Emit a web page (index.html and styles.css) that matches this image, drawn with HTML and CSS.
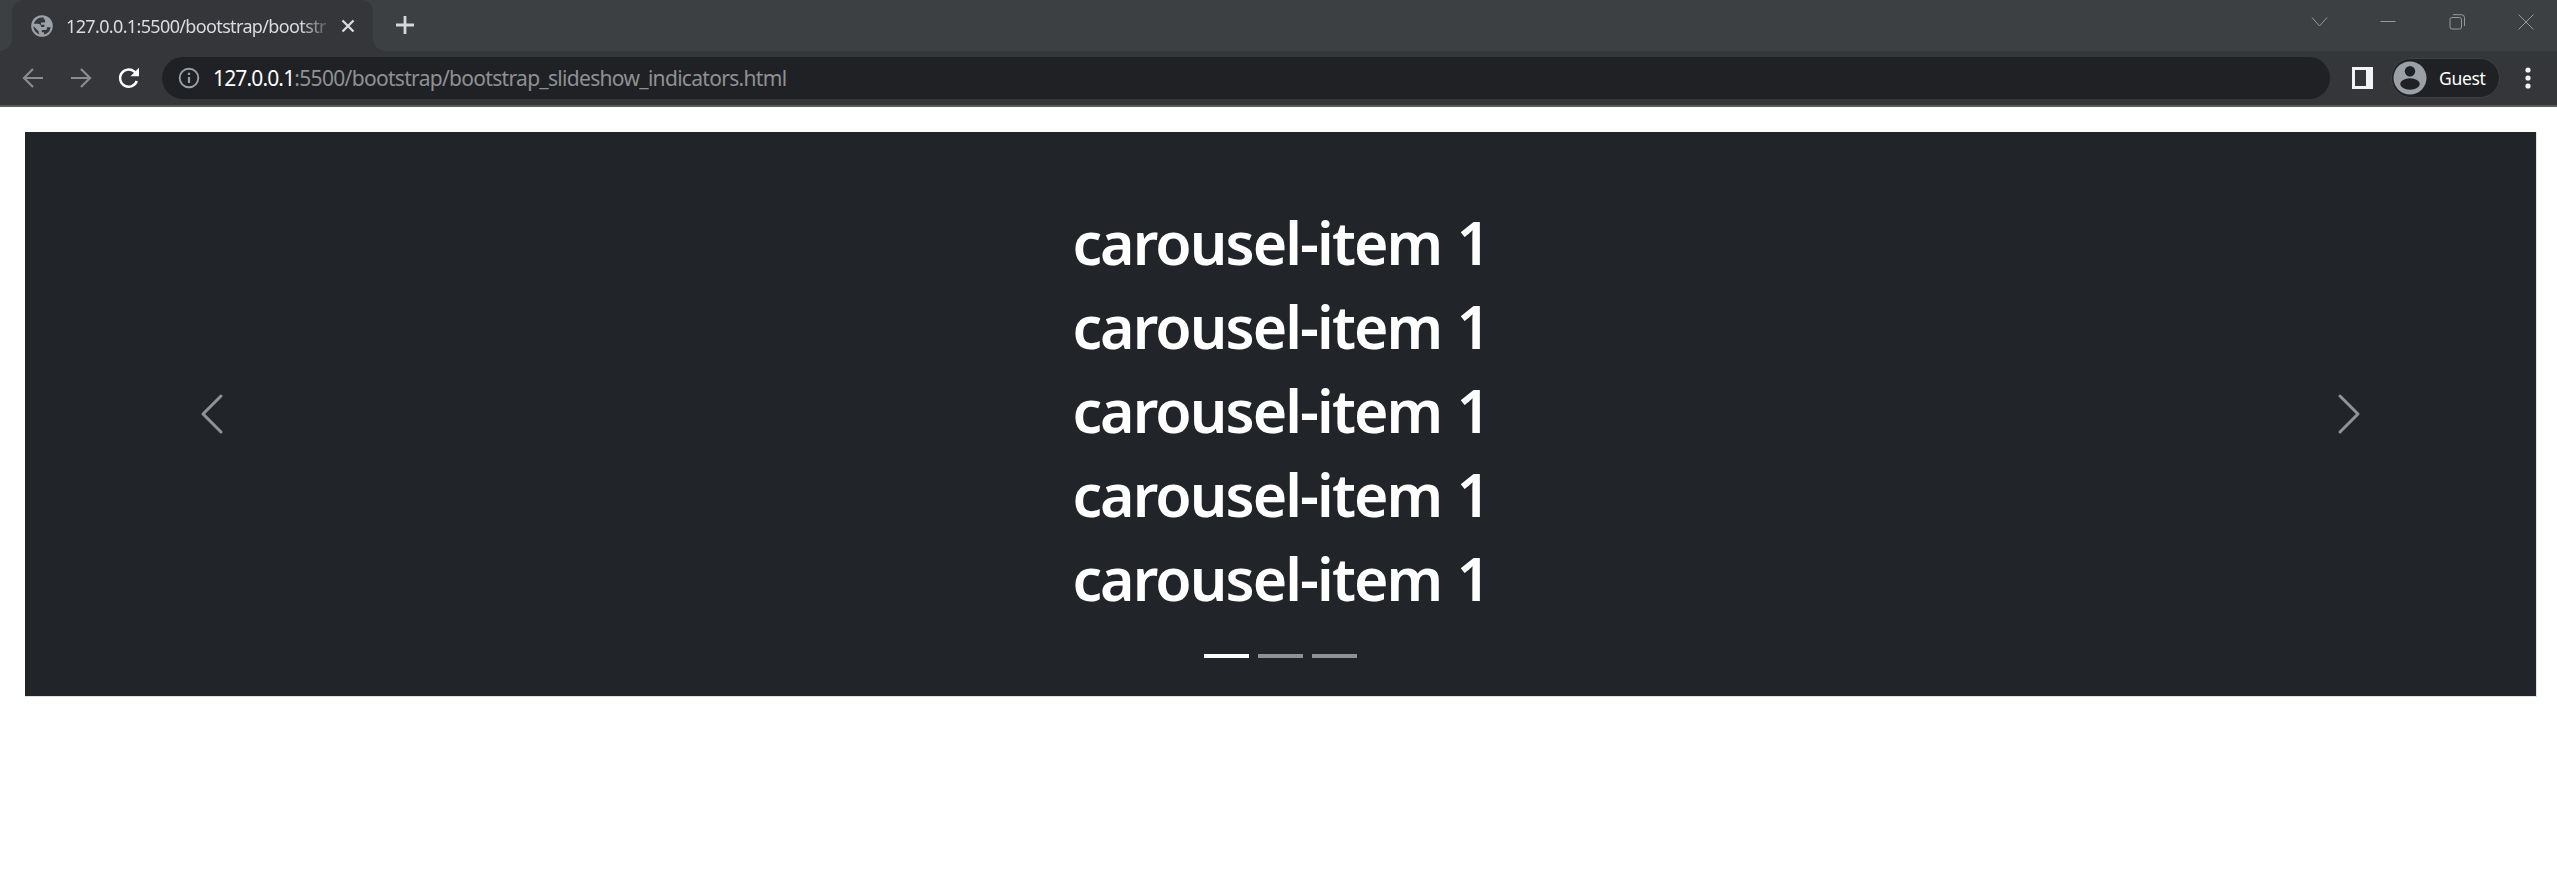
FILE: index.html
```
<!DOCTYPE html>
<html lang="en">
<head>
<meta charset="utf-8">
<title>127.0.0.1:5500/bootstrap/bootstrap_slideshow_indicators.html</title>
<link rel="stylesheet" href="styles.css">
</head>
<body>
<header class="browser">
  <div class="tabstrip">
    <div class="edge edge-left"></div>
    <div class="tab">
      <svg class="globe" width="22" height="22" viewBox="0 0 22 22"><circle cx="11" cy="11" r="10.800" fill="#9aa0a6"/><path fill="#35363a" d="M12.800 2.600a8.700 8.700 0 0 0-10 6.200h3.900c2.200 0 3.400 1.200 3.400 3.200h3.200v-2.200H10V7.600h2.800c.8 0 1.300-.5 1.300-1.300V4.600h-1.300z"/><path fill="#35363a" d="M2.300 11l5.400 5.400v1.100c0 1.100.9 2.100 2.200 2.100A8.700 8.700 0 0 1 2.300 11z"/><path fill="#35363a" d="M13 19.500v-2.200h-2.200v-2.200h3.300c1.200 0 1.800-.8 1.800-1.700v-1.200h3.700a8.700 8.700 0 0 1-6.600 7.300z"/></svg>
      <span class="tab-title">127.0.0.1:5500/bootstrap/bootstr</span>
      <svg class="tab-close" width="14" height="14" viewBox="0 0 14 14"><path d="M1.500 1.500l11 11m0-11l-11 11" stroke="#dadce0" stroke-width="2.300"/></svg>
    </div>
    <div class="edge edge-right"></div>
    <svg class="new-tab" width="18" height="18" viewBox="0 0 18 18"><path d="M9 0v18M0 9h18" stroke="#d5d7d9" stroke-width="2.800"/></svg>
    <div class="window-buttons">
      <svg width="17" height="16" viewBox="0 0 17 16"><path d="M1 3.500l7.500 8.500L16 3.500"/></svg>
      <svg width="16" height="16" viewBox="0 0 16 16"><path d="M.5 7.500h15"/></svg>
      <svg width="17" height="16" viewBox="0 0 17 16"><rect x="1" y="3.500" width="11.500" height="11.500" rx="2"/><path d="M4 .7h8.500a3 3 0 0 1 3 3V12"/></svg>
      <svg width="16" height="16" viewBox="0 0 16 16"><path d="M.5.5l15 15m0-15l-15 15"/></svg>
    </div>
  </div>
  <div class="toolbar">
    <div class="nav">
      <svg width="22" height="22" viewBox="0 0 22 22" stroke="#8b8c8f"><path d="M21 11H3M11 2l-9 9 9 9"/></svg>
      <svg width="22" height="22" viewBox="0 0 22 22" stroke="#8b8c8f"><path d="M1 11h18M11 2l9 9-9 9"/></svg>
      <svg width="22" height="22" viewBox="0 0 22 22" stroke="#fff"><path stroke-width="2.400" d="M18.800 14a8.600 8.600 0 1 1-2.400-9.300l1.500 1.500"/><path stroke="none" fill="#fff" d="M21 .8V9.300h-8.500z"/></svg>
    </div>
    <div class="address">
      <svg width="22" height="22" viewBox="0 0 22 22"><circle cx="11" cy="11" r="9.300" fill="none" stroke="#9aa0a6" stroke-width="1.900"/><path d="M11 10v6M11 5.800v2.200" stroke="#9aa0a6" stroke-width="2.200"/></svg>
      <span class="url"><span class="host">127.0.0.1</span><span class="path">:5500/bootstrap/bootstrap_slideshow_indicators.html</span></span>
    </div>
    <svg class="panel" width="21" height="22" viewBox="0 0 21 22"><path fill="#f1f3f4" fill-rule="evenodd" d="M0 0h21v22H0zM3 3v16h11V3z"/></svg>
    <div class="profile">
      <svg width="34" height="34" viewBox="0 0 34 34"><circle cx="17" cy="17" r="16.500" fill="#9aa0a6"/><circle cx="17" cy="10.300" r="5.200" fill="#202124"/><ellipse cx="17" cy="23" rx="9.800" ry="5.800" fill="#202124"/></svg>
      <span class="guest">Guest</span>
    </div>
    <svg class="menu" width="6" height="22" viewBox="0 0 6 22" fill="#f1f3f4"><circle cx="3" cy="3" r="2.600"/><circle cx="3" cy="11" r="2.600"/><circle cx="3" cy="19" r="2.600"/></svg>
  </div>
</header>
<main class="page">
  <section class="carousel">
    <div class="control"><svg width="48" height="48" viewBox="0 0 16 16" fill="#fff"><path d="M11.354 1.646a.5.5 0 0 1 0 .708L5.707 8l5.647 5.646a.5.5 0 0 1-.708.708l-6-6a.5.5 0 0 1 0-.708l6-6a.5.5 0 0 1 .708 0z"/></svg></div>
    <div class="slide">
      <h1>carousel-item 1</h1>
      <h1>carousel-item 1</h1>
      <h1>carousel-item 1</h1>
      <h1>carousel-item 1</h1>
      <h1>carousel-item 1</h1>
      <div class="indicators"><i class="active"></i><i></i><i></i></div>
    </div>
    <div class="control"><svg width="48" height="48" viewBox="0 0 16 16" fill="#fff"><path d="M4.646 1.646a.5.5 0 0 1 .708 0l6 6a.5.5 0 0 1 0 .708l-6 6a.5.5 0 0 1-.708-.708L10.293 8 4.646 2.354a.5.5 0 0 1 0-.708z"/></svg></div>
  </section>
</main>
</body>
</html>
```
FILE: styles.css
```
* { box-sizing: border-box; }
body { margin: 0; background: #fff; font-family: "Noto Sans", "Open Sans", sans-serif; overflow: hidden; }
svg { display: block; flex: none; }
.browser { height: 107px; background: #35363a; border-bottom: 2px solid #5a5b5f; }
.tabstrip { display: flex; height: 51px; background: #3c4043; }
.edge { width: 12px; height: 51px; flex: none; }
.edge-left { background: radial-gradient(circle at 0 0, transparent 11.500px, #35363a 12px) 0 39px / 12px 12px no-repeat; }
.edge-right { background: radial-gradient(circle at 100% 0, transparent 11.500px, #35363a 12px) 0 39px / 12px 12px no-repeat; }
.tab { display: flex; align-items: center; width: 361px; height: 51px; padding-left: 19px; background: #35363a; border-radius: 12px 12px 0 0; }
.tab-title { width: 261px; margin-left: 13px; white-space: nowrap; color: #dadce0; font-size: 18px; line-height: 30px; letter-spacing: -.64px; -webkit-mask-image: linear-gradient(90deg, #000 234px, transparent 268px); mask-image: linear-gradient(90deg, #000 234px, transparent 268px); }
.tab-close { margin-left: 14px; }
.new-tab { margin: 16px 0 0 11px; }
.window-buttons { display: flex; justify-content: space-between; width: 223px; height: 16px; margin: 14px 23px 0 auto; }
.window-buttons svg { fill: none; stroke: #96999b; stroke-width: 1; }
.toolbar { display: flex; align-items: center; height: 54px; }
.nav { display: flex; gap: 26px; width: 162px; padding-left: 22px; }
.nav svg { fill: none; stroke-width: 2.200; }
.address { display: flex; align-items: center; width: 2168px; height: 42px; padding-left: 16px; border-radius: 21px; background: #202124; }
.url { margin-left: 13px; font-size: 21px; line-height: 30px; white-space: nowrap; }
.host { color: #fff; letter-spacing: -.85px; }
.path { color: #8e9194; letter-spacing: -.69px; }
.panel { margin-left: 22px; }
.profile { display: flex; align-items: center; width: 109px; height: 40px; margin-left: 18px; padding-left: 1px; border: 1px solid #404145; border-radius: 20px; background: #202124; }
.guest { margin-left: 12px; color: #fff; font-size: 17.500px; letter-spacing: -.3px; }
.menu { margin-left: 25px; }
.page { padding: 25px 20px 0 25px; }
.carousel { display: flex; width: 2512px; height: 565px; background: #212529; border: solid #dee2e6; border-width: 0 1px 1px 0; }
.control { display: flex; width: 374px; height: 564px; align-items: center; justify-content: center; flex: none; opacity: .5; }
.slide { flex: 1; padding-top: 72px; text-align: center; color: #fff; }
h1 { margin: 0 0 12px; padding-top: 2px; height: 72px; font-size: 59px; line-height: 72px; font-weight: 600; letter-spacing: -1.900px; word-spacing: 2px; white-space: nowrap; }
.indicators { display: flex; justify-content: center; gap: 9px; padding-top: 30px; }
.indicators i { width: 45px; height: 4px; background: #fff; opacity: .5; }
.indicators .active { opacity: 1; }
```
